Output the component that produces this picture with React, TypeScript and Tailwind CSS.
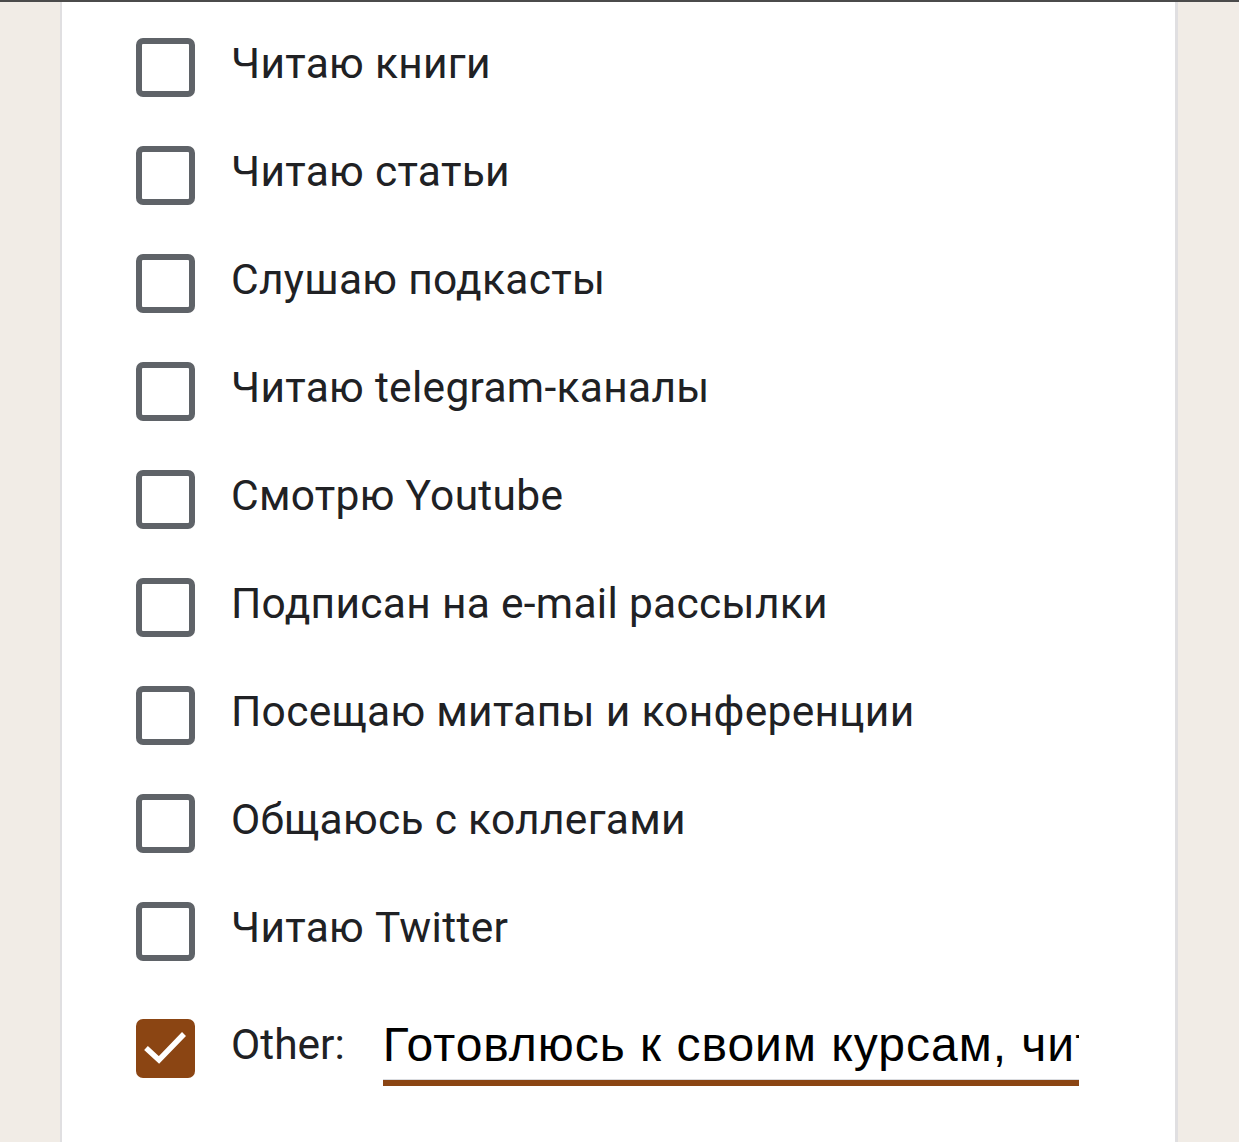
import React from 'react';

const options = [
  'Читаю книги',
  'Читаю статьи',
  'Слушаю подкасты',
  'Читаю telegram-каналы',
  'Смотрю Youtube',
  'Подписан на e-mail рассылки',
  'Посещаю митапы и конференции',
  'Общаюсь с коллегами',
  'Читаю Twitter',
];

const Box: React.FC<{ checked?: boolean }> = ({ checked }) =>
  checked ? (
    <div className="w-[59px] h-[59px] rounded-[7px] bg-[#8b4513] shrink-0">
      <svg width="59" height="59" viewBox="0 0 59 59" fill="none">
        <polyline points="10,29 23,41 48,15" stroke="white" strokeWidth="5.5" />
      </svg>
    </div>
  ) : (
    <div className="w-[59px] h-[59px] rounded-[7px] border-[6px] border-[#5f6368] shrink-0" />
  );

export default function App() {
  return (
    <div className="w-[1239px] h-[1142px] bg-[#f1ece6] overflow-hidden relative" style={{ fontFamily: 'Roboto, sans-serif' }}>
      <div className="h-[2px] bg-[#4b4b4b]" />
      <div className="ml-[60px] w-[1118px] h-[1140px] bg-white border-l-[2px] border-r-[3px] border-[#e0dfe1] pl-[74px] pt-[36px]">
        <div className="flex flex-col gap-[49px]">
          {options.map((o) => (
            <div key={o} className="flex items-start h-[59px]">
              <Box />
              <span className="ml-[36px] mt-[5px] text-[42.5px] text-[#202124] leading-none tracking-[0.3px]">{o}</span>
            </div>
          ))}
        </div>
        <div className="flex items-start mt-[58px]">
          <Box checked />
          <span className="ml-[36px] mt-[5px] text-[42.5px] text-[#202124] leading-none">Other:</span>
          <div className="ml-[38px] mt-[2px] w-[696px]">
            <div
              className="text-[48px] text-black leading-none whitespace-nowrap overflow-hidden pb-[10px] tracking-[1px]"
              style={{ fontFamily: '"Liberation Sans", Arial, sans-serif' }}
            >
              Готовлюсь к своим курсам, читаю документацию
            </div>
            <div className="h-[1px] bg-[#dadce0]" />
            <div className="h-[6px] bg-[#8b4513]" />
          </div>
        </div>
      </div>
    </div>
  );
}
